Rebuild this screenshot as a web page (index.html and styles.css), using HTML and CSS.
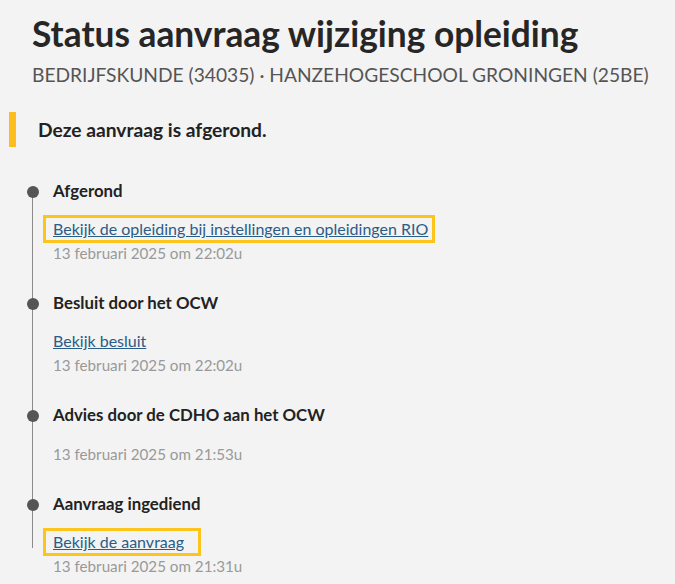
FILE: index.html
```html
<!DOCTYPE html>
<html lang="nl">
<head>
<meta charset="utf-8">
<title>Status aanvraag wijziging opleiding</title>
<link rel="stylesheet" href="styles.css">
</head>
<body>
<main class="page">
  <header class="page-header">
    <h1 class="title">Status aanvraag wijziging opleiding</h1>
    <p class="subtitle">BEDRIJFSKUNDE (34035) · HANZEHOGESCHOOL GRONINGEN (25BE)</p>
  </header>
  <div class="notice">Deze aanvraag is afgerond.</div>
  <ol class="timeline">
    <li class="step">
      <h2 class="step-title">Afgerond</h2>
      <div class="step-link"><a class="link focus" href="#">Bekijk de opleiding bij instellingen en opleidingen RIO</a></div>
      <div class="step-date">13 februari 2025 om 22:02u</div>
    </li>
    <li class="step">
      <h2 class="step-title">Besluit door het OCW</h2>
      <div class="step-link"><a class="link" href="#">Bekijk besluit</a></div>
      <div class="step-date">13 februari 2025 om 22:02u</div>
    </li>
    <li class="step">
      <h2 class="step-title">Advies door de CDHO aan het OCW</h2>
      <div class="step-date">13 februari 2025 om 21:53u</div>
    </li>
    <li class="step">
      <h2 class="step-title">Aanvraag ingediend</h2>
      <div class="step-link"><a class="link focus focus-wide" href="#">Bekijk de aanvraag</a></div>
      <div class="step-date">13 februari 2025 om 21:31u</div>
    </li>
  </ol>
</main>
</body>
</html>
```
FILE: styles.css
```css
html, body {
  margin: 0;
  padding: 0;
  background: #f3f3f3;
}
body {
  font-family: Lato, "Noto Sans", sans-serif;
  color: #222;
}
.page {
  padding: 12px 0 0 0;
}
.page-header {
  padding-left: 32px;
}
.title {
  margin: 0;
  font-size: 35.3px;
  line-height: 44px;
  font-weight: 700;
  color: #262626;
}
.subtitle {
  margin: 6px 0 0 0;
  font-size: 19.2px;
  line-height: 26px;
  color: #555;
  text-transform: uppercase;
}
.notice {
  margin: 24px 0 0 9px;
  border-left: 7px solid #fdbd1f;
  padding-left: 22px;
  height: 35px;
  display: flex;
  align-items: center;
  font-size: 19.2px;
  font-weight: 700;
  color: #222;
}
.timeline {
  list-style: none;
  margin: 32px 0 0 32px;
  padding: 0;
  position: relative;
}
.timeline::before {
  content: "";
  position: absolute;
  left: 0;
  top: 12px;
  bottom: 30px;
  width: 1px;
  background: #8a8a8a;
}
.step {
  position: relative;
  padding-left: 21px;
  margin-bottom: 26px;
}
.step::before {
  content: "";
  position: absolute;
  left: -5.5px;
  top: 6.5px;
  width: 12px;
  height: 12px;
  border-radius: 50%;
  background: #555;
}
.step-title {
  margin: 0 0 14px 0;
  font-size: 16.8px;
  line-height: 24px;
  font-weight: 700;
  color: #222;
}
.step-link {
  font-size: 16px;
  line-height: 23px;
}
.link {
  color: #2a5c88;
  text-decoration: underline;
}
.focus {
  padding: 1px 4px 2px 7px;
  margin-left: -7px;
  outline: 3px solid #fdc51c;
}
.focus-wide {
  padding-right: 14px;
}
.step-date {
  padding-top: 2px;
  font-size: 15.2px;
  line-height: 23px;
  color: #999;
}
```
